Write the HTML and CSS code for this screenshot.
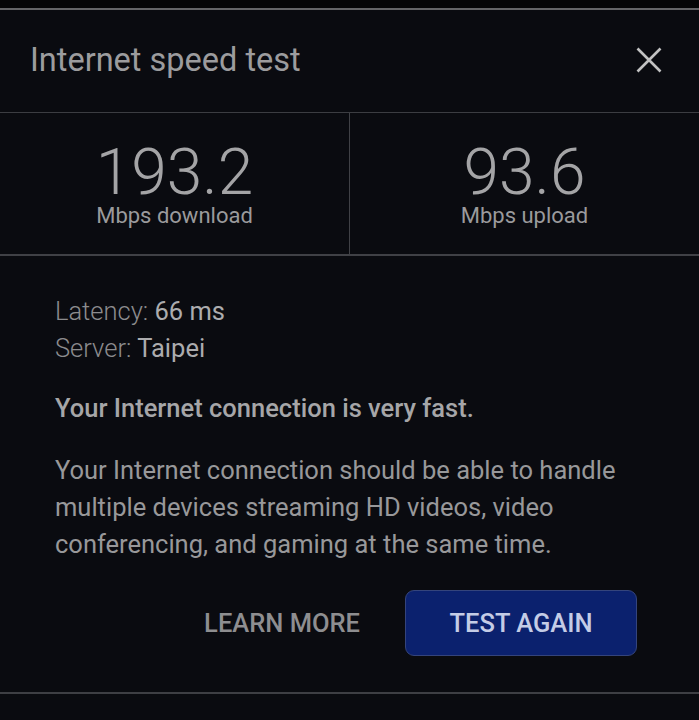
FILE: index.html
```html
<!DOCTYPE html>
<html lang="en">
<head>
<meta charset="utf-8">
<title>Internet speed test</title>
<link rel="stylesheet" href="styles.css">
</head>
<body>
<div class="topstrip"></div>
<div class="dialog">
  <header class="header">
    <h1 class="title">Internet speed test</h1>
    <button class="close" aria-label="Close">
      <svg width="26" height="26" viewBox="0 0 26 26"><path d="M1.5 1.5 L24.5 24.5 M24.5 1.5 L1.5 24.5" stroke="#c2c2c2" stroke-width="2.6" fill="none"/></svg>
    </button>
  </header>
  <section class="stats">
    <div class="stat">
      <div class="num">193.2</div>
      <div class="unit">Mbps download</div>
    </div>
    <div class="stat">
      <div class="num">93.6</div>
      <div class="unit">Mbps upload</div>
    </div>
  </section>
  <section class="body">
    <div class="meta">
      <div><span class="lbl">Latency:</span> <span class="val">66 ms</span></div>
      <div><span class="lbl">Server:</span> <span class="val">Taipei</span></div>
    </div>
    <p class="verdict">Your Internet connection is very fast.</p>
    <p class="desc">Your Internet connection should be able to handle multiple devices streaming HD videos, video conferencing, and gaming at the same time.</p>
    <div class="actions">
      <button class="btn-text">LEARN MORE</button>
      <button class="btn-primary">TEST AGAIN</button>
    </div>
  </section>
  <div class="footer"></div>
</div>
</body>
</html>
```
FILE: styles.css
```css
html, body {
  margin: 0;
  padding: 0;
  background: #0a0b10;
  font-family: Roboto, "Liberation Sans", sans-serif;
  height: 720px;
  overflow: hidden;
}
.topstrip {
  height: 8px;
  background: #050506;
  border-bottom: 2px solid #646466;
}
.dialog {
  background: #0a0b10;
}
.header {
  height: 99px;
  padding: 0 37px 3px 30px;
  display: flex;
  align-items: center;
  justify-content: space-between;
  border-bottom: 1px solid #3c3d42;
}
.title {
  margin: 0;
  font-size: 32.5px;
  line-height: 32px;
  font-weight: 400;
  color: #9c9c9e;
}
.close {
  background: none;
  border: 0;
  padding: 0;
  width: 26px;
  height: 26px;
  display: flex;
}
.stats {
  display: grid;
  grid-template-columns: 349px 1fr;
  height: 141px;
  border-bottom: 2px solid #404146;
}
.stat {
  display: flex;
  flex-direction: column;
  align-items: center;
  padding-top: 31px;
}
.stat + .stat {
  border-left: 1px solid #404146;
}
.num {
  font-size: 64px;
  line-height: 58px;
  font-weight: 300;
  color: #a4a4a6;
}
.unit {
  margin-top: 3px;
  font-size: 22px;
  line-height: 22px;
  color: #9a9a9c;
}
.body {
  padding: 37px 62px 36px 55px;
  border-bottom: 2px solid #3e3f44;
}
.meta {
  font-size: 25.5px;
  line-height: 37px;
}
.lbl {
  font-weight: 300;
  color: #8c8c8e;
}
.val {
  color: #acacae;
}
.verdict {
  margin: 23px 0 0;
  font-size: 25.5px;
  line-height: 37px;
  font-weight: 500;
  color: #a6a6a8;
}
.desc {
  margin: 25px 0 0;
  font-size: 25.5px;
  line-height: 37px;
  color: #98989a;
}
.actions {
  margin-top: 27px;
  display: flex;
  justify-content: flex-end;
  align-items: center;
  gap: 45px;
}
.btn-text {
  background: none;
  border: 0;
  padding: 0;
  font-family: inherit;
  font-size: 25.5px;
  font-weight: 500;
  color: #8e8e90;
}
.btn-primary {
  width: 232px;
  height: 66px;
  background: #0b216e;
  border: 1px solid #34447c;
  border-radius: 9px;
  font-family: inherit;
  font-size: 25.5px;
  font-weight: 500;
  color: #c4cce6;
}
.footer {
  height: 40px;
}
```
